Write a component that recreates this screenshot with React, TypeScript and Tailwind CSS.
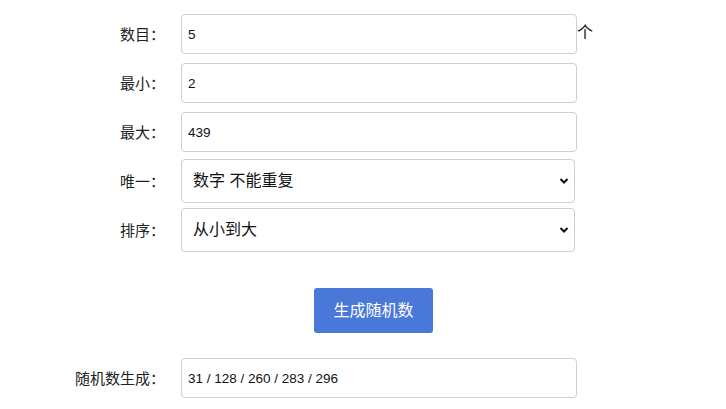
import React from "react";

const font = { fontFamily: '"Liberation Sans", "Noto Sans CJK SC", sans-serif' };

function Label({ children }: { children: React.ReactNode }) {
  return (
    <div className="w-[165px] shrink-0 text-right text-[15px] text-[#222] pt-[3px]">{children}</div>
  );
}

function Chevron() {
  return (
    <svg
      className="pointer-events-none absolute right-[6px] top-1/2 -translate-y-1/2"
      width="10"
      height="7"
      viewBox="0 0 10 7"
    >
      <path d="M1.5 1.5 L5 5 L8.5 1.5" fill="none" stroke="#111" strokeWidth="2" />
    </svg>
  );
}

const inputCls =
  "ml-[16px] w-[396px] h-[40px] border border-[#cfcfcf] rounded-[4px] px-[6px] text-[13.5px] text-[#111] outline-none";
const selectCls =
  "appearance-none w-full h-full border border-[#cfcfcf] rounded-[4px] pl-[11px] text-[16px] text-[#111] bg-white outline-none";

export default function App() {
  return (
    <div className="w-[726px] h-[409px] bg-white text-[#222]" style={font}>
      <div className="pt-[14px]">
        <div className="flex items-center h-[40px]">
          <Label>数目：</Label>
          <input readOnly value="5" className={inputCls} />
          <span className="text-[16px] self-start mt-[7px] text-[#111]">个</span>
        </div>
        <div className="flex items-center h-[40px] mt-[9px]">
          <Label>最小：</Label>
          <input readOnly value="2" className={inputCls} />
        </div>
        <div className="flex items-center h-[40px] mt-[9px]">
          <Label>最大：</Label>
          <input readOnly value="439" className={inputCls} />
        </div>
        <div className="flex items-center h-[44px] mt-[7px]">
          <Label>唯一：</Label>
          <div className="relative ml-[16px] w-[394px] h-[44px]">
            <select className={selectCls}>
              <option>数字 不能重复</option>
            </select>
            <Chevron />
          </div>
        </div>
        <div className="flex items-center h-[44px] mt-[5px]">
          <Label>排序：</Label>
          <div className="relative ml-[16px] w-[394px] h-[44px]">
            <select className={selectCls}>
              <option>从小到大</option>
            </select>
            <Chevron />
          </div>
        </div>
        <div className="mt-[36px] pl-[314px]">
          <button className="w-[119px] h-[45px] rounded-[3px] bg-[#4a78d8] text-white text-[16px]">
            生成随机数
          </button>
        </div>
        <div className="flex items-center h-[40px] mt-[25px]">
          <Label>随机数生成：</Label>
          <input readOnly value="31 / 128 / 260 / 283 / 296" className={inputCls} />
        </div>
      </div>
    </div>
  );
}
